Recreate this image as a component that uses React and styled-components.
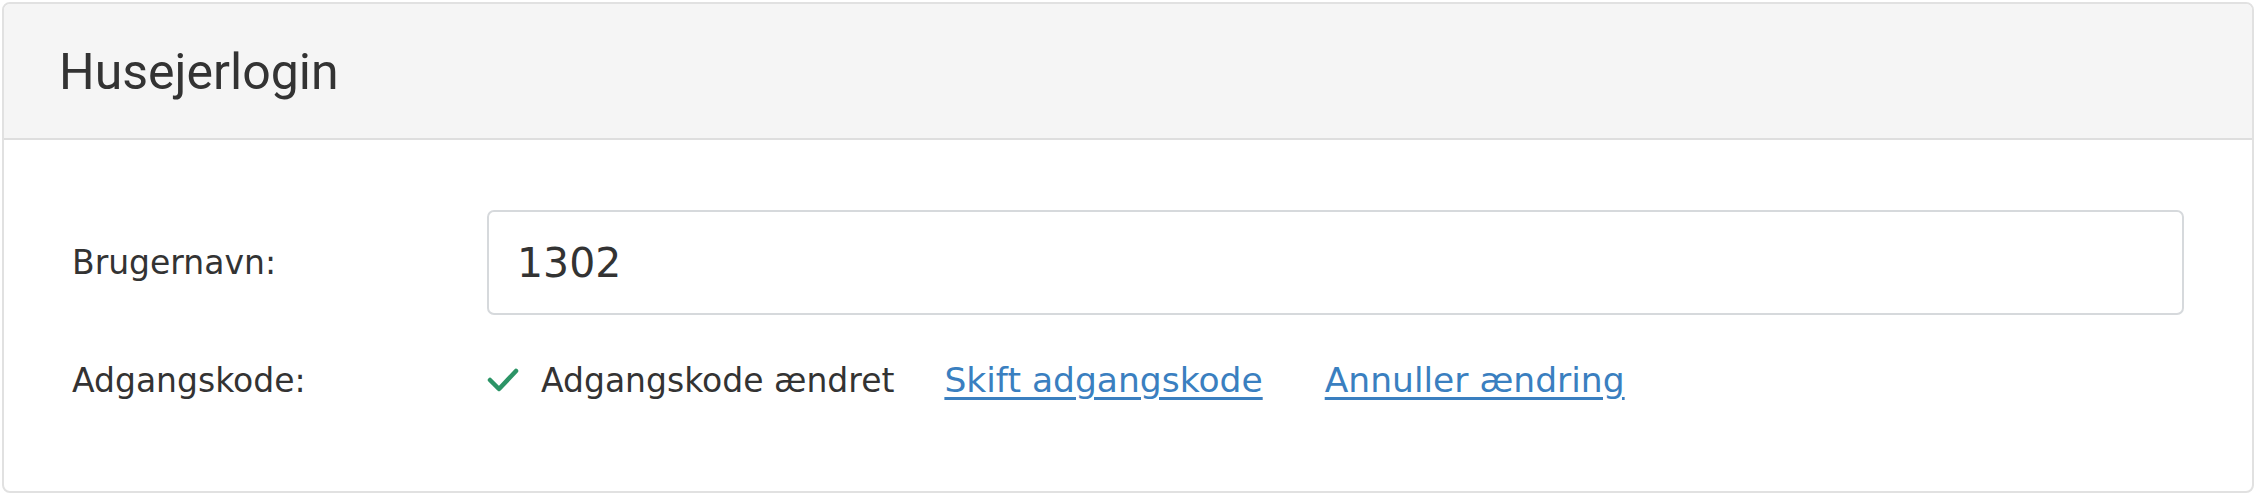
import styled, { createGlobalStyle } from 'styled-components'

const GlobalStyle = createGlobalStyle`
  html, body {
    margin: 0;
    padding: 0;
    background: #ffffff;
  }
  body {
    font-family: "DejaVu Sans", Verdana, sans-serif;
    color: #333333;
  }
`

const Page = styled.div`
  padding: 2px;
`

const Panel = styled.section`
  border: 2px solid #e1e1e1;
  border-radius: 8px;
  background: #ffffff;
  overflow: hidden;
`

const PanelHeader = styled.header`
  height: 132px;
  display: flex;
  align-items: center;
  padding: 2px 55px 0;
  background: #f5f5f5;
  border-bottom: 2px solid #dedede;
`

const Title = styled.h2`
  margin: 0;
  font-family: Roboto, "Liberation Sans", sans-serif;
  font-weight: 400;
  font-size: 50px;
  color: #333333;
`

const PanelBody = styled.div`
  display: grid;
  grid-template-columns: 415px 1fr;
  row-gap: 40px;
  align-items: center;
  padding: 70px 68px 86px 68px;
`

const Label = styled.label`
  font-size: 33px;
  color: #333333;
`

const TextInput = styled.input`
  box-sizing: border-box;
  width: 100%;
  height: 105px;
  padding: 0 28px;
  border: 2px solid #d6d9dc;
  border-radius: 7px;
  font-family: "DejaVu Sans", Verdana, sans-serif;
  font-size: 41px;
  color: #333333;
  background: #ffffff;
  outline: none;
`

const StatusRow = styled.div`
  display: flex;
  align-items: center;
  height: 50px;
  font-size: 33px;
`

const Status = styled.span`
  display: inline-flex;
  align-items: center;
  gap: 22px;
  color: #333333;
`

const LinkButton = styled.a`
  margin-left: ${p => p.$gap}px;
  font-size: 34.5px;
  color: #3a7fc0;
  text-decoration: underline;
  text-underline-offset: 5px;
  cursor: pointer;
`

function CheckIcon() {
  return (
    <svg width="32" height="26" viewBox="0 0 32 26">
      <polyline
        points="3,13 12,22 29,4"
        fill="none"
        stroke="#2c9466"
        strokeWidth="4.5"
        strokeLinecap="round"
        strokeLinejoin="round"
      />
    </svg>
  )
}

function App() {
  return (
    <Page>
      <GlobalStyle />
      <Panel>
        <PanelHeader>
          <Title>Husejerlogin</Title>
        </PanelHeader>
        <PanelBody>
          <Label htmlFor="username">Brugernavn:</Label>
          <TextInput id="username" defaultValue="1302" />
          <Label>Adgangskode:</Label>
          <StatusRow>
            <Status>
              <CheckIcon />
              Adgangskode ændret
            </Status>
            <LinkButton $gap={50}>Skift adgangskode</LinkButton>
            <LinkButton $gap={62}>Annuller ændring</LinkButton>
          </StatusRow>
        </PanelBody>
      </Panel>
    </Page>
  )
}

export default App
